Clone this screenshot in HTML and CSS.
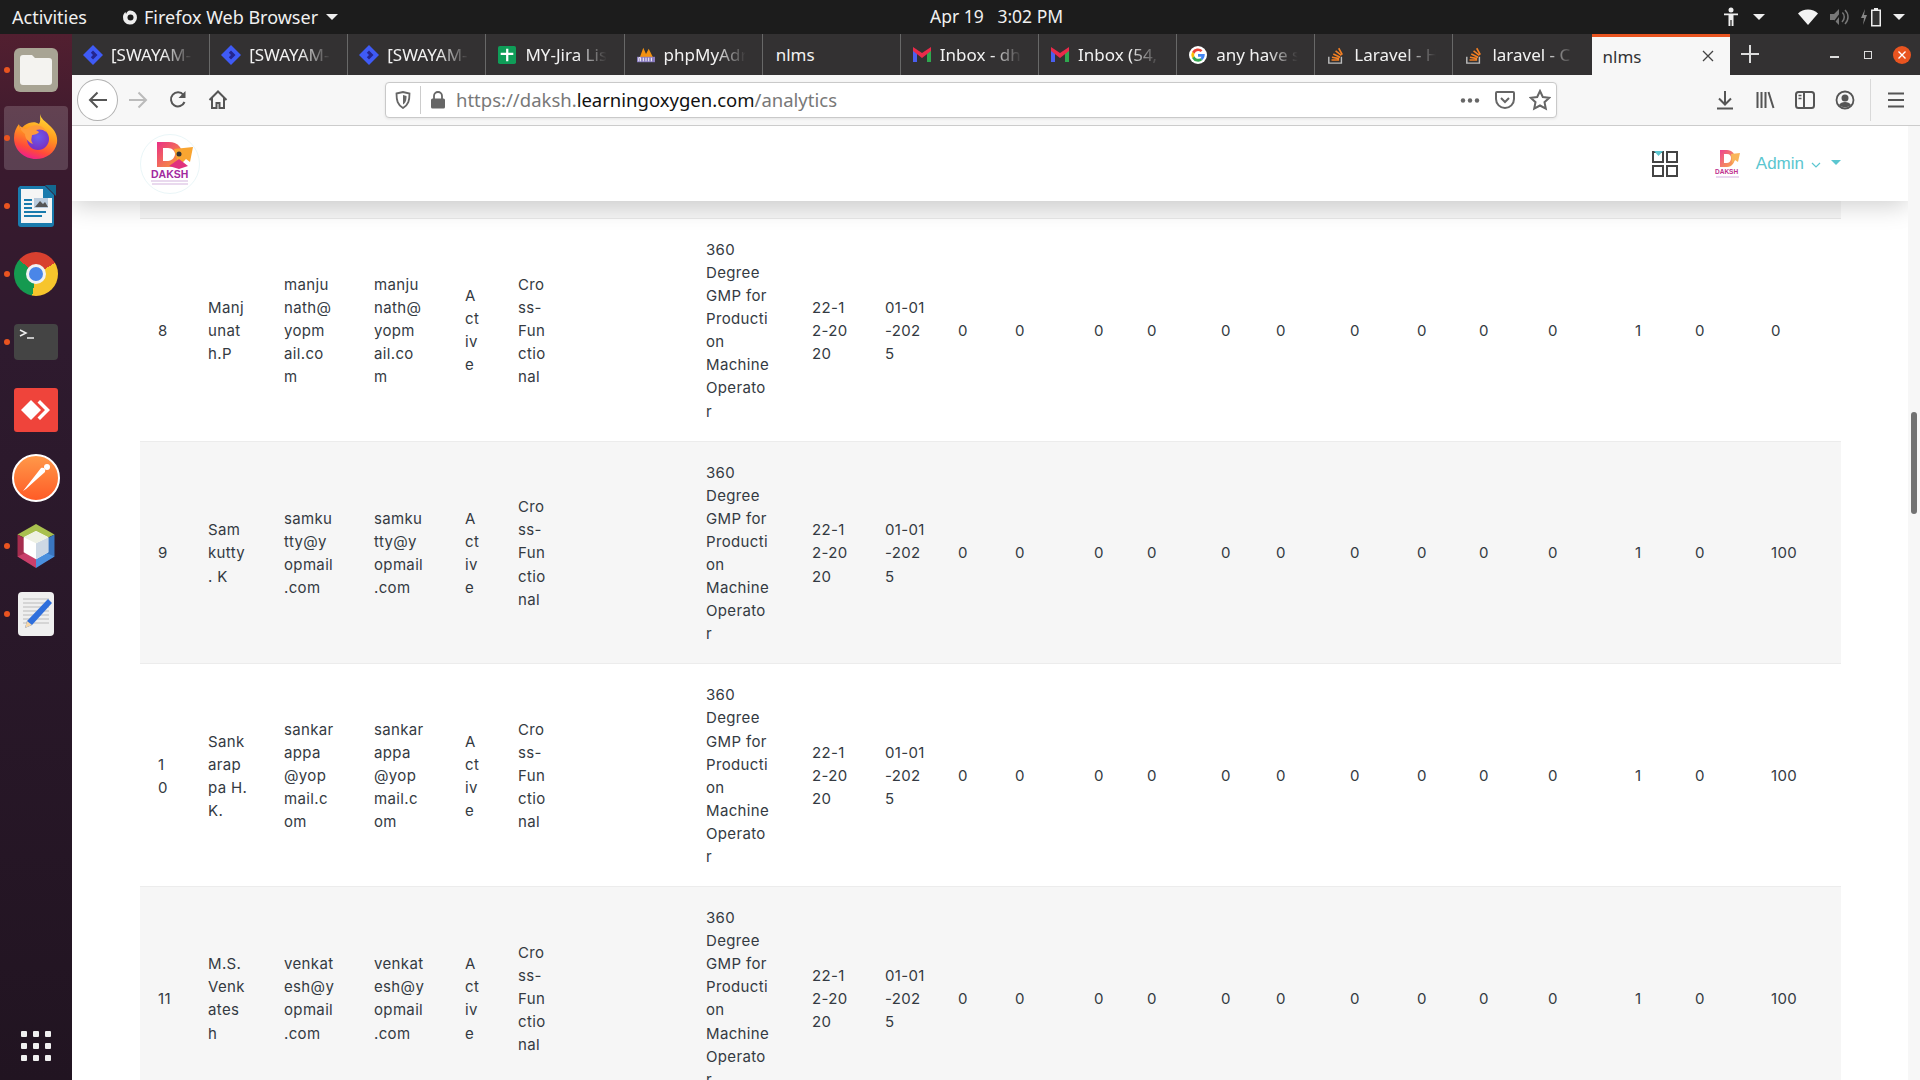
FILE: index.html
```html
<!DOCTYPE html>
<html lang="en">
<head>
  <meta charset="UTF-8">
  <title>nlms</title>
  <link rel="stylesheet" href="styles.css">
</head>
<body>
<div class="topbar">
  <span class="activities">Activities</span>
  <span class="appmenu">
    <svg class="app-ico" viewBox="0 0 18 18"><path d="M9 2.500a7 7 0 1 1-7 6.500c0-2 1-4 2.500-5L5 6c1-2 2-3.500 4-3.500z" fill="#eee"/><circle cx="9.500" cy="9.500" r="3" fill="#1c1c1c"/></svg>
    Firefox Web Browser
    <i class="caret"></i>
  </span>
  <span class="clock">Apr 19&nbsp;&nbsp; 3:02 PM</span>
  <span class="tray">
    <svg class="tray-person" viewBox="0 0 16 20"><circle cx="8" cy="3" r="2.500" fill="#eee"/><path d="M1 6.500h14v1.800h-4.500V19H8.600v-6H7.400v6H5.500V8.300H1z" fill="#eee"/></svg>
    <i class="caret caret-a11y"></i>
    <svg class="tray-wifi" viewBox="0 0 20 16"><path d="M0 4.500C5-1 15-1 20 4.500L10 16z" fill="#f2f2f2"/></svg>
    <svg class="tray-vol" viewBox="0 0 20 18"><path d="M1 6h4l5-5v16l-5-5H1z" fill="#777"/><path d="M13 4c3 3 3 7 0 10M16 2c4 4 4 10 0 14" stroke="#777" stroke-width="1.500" fill="none"/><path d="M3 17 15 1" stroke="#1c1c1c" stroke-width="1.500"/></svg>
    <svg class="tray-batt" viewBox="0 0 26 20"><path d="M5 2 1 11h3l-1 7 4-10H4z" fill="#888"/><path d="M14 1h4v1.500h3v17h-10v-17h3z" fill="#eee"/><path d="M12.500 4h7v14h-7z" fill="#333"/></svg>
    <i class="caret"></i>
  </span>
</div>

<div class="desktop">
  <nav class="dock">
    <div class="dock-item running">
      <svg class="dock-ico" viewBox="0 0 44 44"><rect width="44" height="44" rx="6" fill="#a8a494"/><path d="M6 10a3 3 0 0 1 3-3h9l3 3h14a3 3 0 0 1 3 3v21a3 3 0 0 1-3 3H9a3 3 0 0 1-3-3z" fill="#f4f3f0"/></svg>
    </div>
    <div class="dock-item running active">
      <svg class="dock-ico dock-ico-lg dock-ico-ff" viewBox="0 0 48 48">
        <defs>
          <linearGradient id="ffa" x1="0.750" y1="0" x2="0.400" y2="1"><stop offset="0" stop-color="#ffe03a"/><stop offset="0.450" stop-color="#ff9a1e"/><stop offset="0.800" stop-color="#ff4a3a"/><stop offset="1" stop-color="#f0208a"/></linearGradient>
          <radialGradient id="ffg" cx="0.500" cy="0.400" r="0.650"><stop offset="0" stop-color="#6a5cf0"/><stop offset="1" stop-color="#7a2cbc"/></radialGradient>
        </defs>
        <path d="M28 2c1 5 5 7 9 11 6 5 9 11 8 18-2 10-11 16-21 16C12 47 2 38 2 26c0-6 2-10 5-14 0 2 1 4 2 5 2-3 5-5 8-6 4-1 7-1 10 1 2-3 1-6 1-10z" fill="url(#ffa)"/>
        <circle cx="26" cy="27" r="11" fill="url(#ffg)"/>
        <path d="M7 13c2 2 5 4 8 4 3-3 9-5 13-3 3 1 5 3 6 6-3-3-7-3-10-2l3 2c-1 2-5 3-7 3 0 3-2 5 1 9-5-2-8-6-8-10-3-2-5-5-6-9z" fill="#ff9a3a"/>
      </svg>
    </div>
    <div class="dock-item running">
      <svg class="dock-ico" viewBox="0 0 44 44"><path d="M6 2h25l9 9v29a3 3 0 0 1-3 3H7a3 3 0 0 1-3-3V4z" fill="#1a7bad"/><path d="M7 5h22v9h9v25H7z" fill="#f5f5f5"/><path d="M31 1h11v11z" fill="#13688f"/><path d="M10 15h8v2h-8zm0 4h8v2h-8zm0 4h8v2h-8zm0 4h22v2H10zm0 4h18v2H10z" fill="#1a7bad"/><rect x="20" y="14" width="14" height="10" fill="#bcd"/><path d="M21 23l5-6 3 3 2-2 3 5z" fill="#555"/></svg>
    </div>
    <div class="dock-item running">
      <div class="chrome"><span></span></div>
    </div>
    <div class="dock-item running">
      <svg class="dock-ico" viewBox="0 0 44 36"><rect width="44" height="36" rx="4" fill="#444"/><path d="M6 6l6 3-6 3" stroke="#eee" stroke-width="1.500" fill="none"/><path d="M13 14h7" stroke="#eee" stroke-width="1.500"/></svg>
    </div>
    <div class="dock-item">
      <svg class="dock-ico" viewBox="0 0 44 44"><rect width="44" height="44" rx="3" fill="#ef443b"/><path d="M7 22l10-10 10 10-10 10z" fill="#fff"/><path d="M26 12l10 10-10 10-2.500-2.500L31 22l-7.500-7.500z" fill="#fff"/></svg>
    </div>
    <div class="dock-item">
      <svg class="dock-ico dock-ico-lg" viewBox="0 0 48 48">
        <defs><linearGradient id="pm" x1="0" y1="0" x2="0" y2="1"><stop offset="0" stop-color="#ff9a4a"/><stop offset="1" stop-color="#ff5a26"/></linearGradient></defs>
        <circle cx="24" cy="24" r="23" fill="url(#pm)" stroke="#fff" stroke-width="2"/>
        <path d="M11 37l11-14 7-9c3-1 5 1 4 4l-9 8-10 9z" fill="#fff"/>
        <circle cx="35" cy="13" r="3" fill="#fff"/>
      </svg>
    </div>
    <div class="dock-item running">
      <svg class="dock-ico" viewBox="0 0 42 50"><path d="M21 0 42 12 21 22 0 12z" fill="#a9c04f"/><path d="M42 12v25L31 43V18z" fill="#3a76c0"/><path d="M0 12v25l11 6V18z" fill="#a52d4e"/><path d="M0 37l21 13V38l-10-6z" fill="#c93f6a"/><path d="M42 37 21 50V38l10-6z" fill="#4a90de"/><path d="M21 8l14 7v17l-14 8-14-8V15z" fill="#fff"/><path d="M21 22l14-7v17l-14 8z" fill="#cdd8e4"/><path d="M21 8l14 7-14 7-14-7z" fill="#eef1e4"/></svg>
    </div>
    <div class="dock-item running">
      <svg class="dock-ico" viewBox="0 0 36 44"><rect width="36" height="44" rx="4" fill="#efefef"/><path d="M5 7h26M5 11h26M5 15h26M5 19h26M5 23h26M5 27h26M5 31h26" stroke="#bbb"/><path d="M30 7l4 4-20 22-7 3 2-7z" fill="#2f6fdc"/><path d="M9 29l5 4-7 3z" fill="#f5d6a8"/></svg>
    </div>
    <div class="dock-grid">
      <i></i><i></i><i></i><i></i><i></i><i></i><i></i><i></i><i></i>
    </div>
  </nav>

  <div class="browser">
    <div class="tabstrip">
      <div class="tab"><svg class="fav fav-jira" viewBox="0 0 20 20"><path d="M10 0l10 10-10 10L0 10z" fill="#3f5bf6"/><path d="M10 5.500 14.500 10 10 14.500 7.800 12.200 10 10 7.800 7.800z" fill="#24258f"/></svg><span class="tab-title">[SWAYAM-</span></div>
      <div class="tab"><svg class="fav fav-jira" viewBox="0 0 20 20"><path d="M10 0l10 10-10 10L0 10z" fill="#3f5bf6"/><path d="M10 5.500 14.500 10 10 14.500 7.800 12.200 10 10 7.800 7.800z" fill="#24258f"/></svg><span class="tab-title">[SWAYAM-</span></div>
      <div class="tab"><svg class="fav fav-jira" viewBox="0 0 20 20"><path d="M10 0l10 10-10 10L0 10z" fill="#3f5bf6"/><path d="M10 5.500 14.500 10 10 14.500 7.800 12.200 10 10 7.800 7.800z" fill="#24258f"/></svg><span class="tab-title">[SWAYAM-</span></div>
      <div class="tab"><svg class="fav" viewBox="0 0 20 20"><rect width="20" height="20" rx="2" fill="#0f9d58"/><path d="M9 3h2.500v4.500H17V10h-5.500v7H9v-7H3V7.500h6z" fill="#fff"/></svg><span class="tab-title">MY-Jira Lis</span></div>
      <div class="tab"><svg class="fav" viewBox="0 0 20 20"><path d="M3 13 7 2l3 7 3-6 5 10z" fill="#f29111"/><rect y="12" width="20" height="6" fill="#8a7cc0"/><path d="M2 17v-4h2v4m3 0v-4m3 0v4m3-4v4m3-4v4" stroke="#fff" fill="none"/></svg><span class="tab-title">phpMyAdr</span></div>
      <div class="tab tab-plain"><span class="tab-title">nlms</span></div>
      <div class="tab"><svg class="fav" viewBox="0 0 18 16"><path d="M0 3v12h4V6z" fill="#4a5ff0"/><path d="M18 3v12h-4V6z" fill="#2fa84f"/><path d="M0 0v4l9 7 9-7V0l-9 6z" fill="#ea2a4a"/></svg><span class="tab-title">Inbox - dh</span></div>
      <div class="tab"><svg class="fav" viewBox="0 0 18 16"><path d="M0 3v12h4V6z" fill="#4a5ff0"/><path d="M18 3v12h-4V6z" fill="#2fa84f"/><path d="M0 0v4l9 7 9-7V0l-9 6z" fill="#ea2a4a"/></svg><span class="tab-title">Inbox (54,</span></div>
      <div class="tab"><svg class="fav" viewBox="0 0 20 20"><circle cx="10" cy="10" r="10" fill="#fff"/><path d="M10 5.500a4.500 4.500 0 0 1 3 1.200l2-2A7.500 7.500 0 0 0 3.500 6.500L6 8.500A4.500 4.500 0 0 1 10 5.500z" fill="#ea4335"/><path d="M3.500 6.500a7.500 7.500 0 0 0 0 7L6 11.500a4.500 4.500 0 0 1 0-3z" fill="#fbbc05"/><path d="M3.500 13.500a7.500 7.500 0 0 0 11.500 2l-2.400-2A4.500 4.500 0 0 1 6 11.500z" fill="#34a853"/><path d="M17.500 9H10v3h4a4 4 0 0 1-1.400 1.500l2.400 2c1.500-1.500 2.500-3 2.500-6.500z" fill="#4285f4"/></svg><span class="tab-title">any have s</span></div>
      <div class="tab"><svg class="fav" viewBox="0 0 18 20"><path d="M1 12v7h14v-7" stroke="#bbb" stroke-width="1.600" fill="none"/><path d="M4 15.500h8.500M4.500 12.500l8 1.500M6 9l7.500 3.500M8.500 5.500l6.500 5M12 2.500l4 7" stroke="#f48024" stroke-width="1.800"/></svg><span class="tab-title">Laravel - H</span></div>
      <div class="tab"><svg class="fav" viewBox="0 0 18 20"><path d="M1 12v7h14v-7" stroke="#bbb" stroke-width="1.600" fill="none"/><path d="M4 15.500h8.500M4.500 12.500l8 1.500M6 9l7.500 3.500M8.500 5.500l6.500 5M12 2.500l4 7" stroke="#f48024" stroke-width="1.800"/></svg><span class="tab-title">laravel - C</span></div>
      <div class="tab tab-active"><span class="tab-title">nlms</span>
        <svg class="tab-close" viewBox="0 0 12 12"><path d="M1 1l10 10M11 1 1 11" stroke="#444" stroke-width="1.300"/></svg>
      </div>
      <svg class="newtab" viewBox="0 0 18 18"><path d="M9 0v18M0 9h18" stroke="#ddd" stroke-width="2"/></svg>
      <div class="winctl">
        <i class="win-min"></i>
        <i class="win-max"></i>
        <span class="win-close">
          <svg viewBox="0 0 10 10"><path d="M1.500 1.500l7 7M8.500 1.500l-7 7" stroke="#fff" stroke-width="1.400"/></svg>
        </span>
      </div>
    </div>

    <div class="toolbar">
      <span class="backbtn">
        <svg class="tb-ico" viewBox="0 0 20 20"><path d="M19 10H2M9.500 2.500 2 10l7.500 7.500" stroke="#555" stroke-width="2" fill="none"/></svg>
      </span>
      <svg class="tb-ico tb-fwd" viewBox="0 0 20 20"><path d="M1 10h17M10.500 2.500 18 10l-7.500 7.500" stroke="#bbb" stroke-width="2" fill="none"/></svg>
      <svg class="tb-ico tb-reload" viewBox="0 0 20 20"><path d="M16.500 12a7 7 0 1 1-1-7" stroke="#555" stroke-width="2" fill="none"/><path d="M17.500 1v7h-7z" fill="#555"/></svg>
      <svg class="tb-ico tb-home" viewBox="0 0 20 20"><path d="M1.500 10 10 1.500l8.500 8.500M4 8v10h4.500v-5h3v5H16V8" stroke="#555" stroke-width="2" fill="none"/></svg>
      <div class="urlbar">
        <svg class="url-shield" viewBox="0 0 16 18"><path d="M1.500 2.500 8 1l6.500 1.500c0 7-1 11-6.500 14.500C2.500 13.500 1.500 9.500 1.500 2.500z" stroke="#666" stroke-width="1.800" fill="none"/><path d="M8 4l3.500 1c0 4-.5 6.500-3.500 8.500z" fill="#666"/></svg>
        <i class="url-sep"></i>
        <svg class="url-lock" viewBox="0 0 16 18"><path d="M4 8V5a4 4 0 0 1 8 0v3" stroke="#666" stroke-width="1.800" fill="none"/><rect x="1" y="7.500" width="14" height="10" rx="1.500" fill="#666"/></svg>
        <span class="url-text">https://daksh.<b>learningoxygen.com</b>/analytics</span>
        <svg class="url-dots" viewBox="0 0 20 5"><circle cx="3" cy="2.500" r="2.200" fill="#666"/><circle cx="10" cy="2.500" r="2.200" fill="#666"/><circle cx="17" cy="2.500" r="2.200" fill="#666"/></svg>
        <svg class="url-pocket" viewBox="0 0 20 20"><path d="M2 2h16a1 1 0 0 1 1 1v6a9 9 0 0 1-18 0V3a1 1 0 0 1 1-1z" stroke="#666" stroke-width="2" fill="none"/><path d="M6 8l4 4 4-4" stroke="#666" stroke-width="2" fill="none"/></svg>
        <svg class="url-star" viewBox="0 0 22 22"><path d="M11 2l2.800 6 6.500.8-4.800 4.400 1.300 6.500L11 16.500l-5.800 3.200 1.300-6.500L1.700 8.800 8.200 8z" stroke="#666" stroke-width="2" fill="none"/></svg>
      </div>
      <div class="tb-right">
        <svg class="tb-ico" viewBox="0 0 20 20"><path d="M10 1v13M4 8.500l6 6 6-6" stroke="#555" stroke-width="2" fill="none"/><path d="M2 18.500h16" stroke="#555" stroke-width="2"/></svg>
        <svg class="tb-ico" viewBox="0 0 20 20"><path d="M2.500 2v16M6.500 2v16M10.500 2v16M13.500 2l5 16" stroke="#555" stroke-width="2" fill="none"/></svg>
        <svg class="tb-ico" viewBox="0 0 20 20"><rect x="1" y="2" width="18" height="16" rx="2.500" stroke="#555" stroke-width="2" fill="none"/><path d="M9 2v16" stroke="#555" stroke-width="2"/><path d="M3.500 5.500h3M3.500 8.500h3" stroke="#555" stroke-width="1.500"/></svg>
        <svg class="tb-ico" viewBox="0 0 20 20"><circle cx="10" cy="10" r="8.500" stroke="#555" stroke-width="1.800" fill="none"/><circle cx="10" cy="8" r="3.500" fill="#555"/><path d="M4 15c2-4 10-4 12 0-3 3-9 3-12 0z" fill="#555"/></svg>
        <i class="tb-sep"></i>
        <svg class="tb-ico" viewBox="0 0 20 20"><path d="M2 3.500h16M2 10h16M2 16.500h16" stroke="#555" stroke-width="2.200"/></svg>
      </div>
    </div>

    <div class="page">
      <main class="content">
        <header class="appbar">
          <svg class="logo" viewBox="0 0 60 63">
            <defs><linearGradient id="dk" x1="0" y1="0" x2="1" y2="1"><stop offset="0" stop-color="#ea2f86"/><stop offset="1" stop-color="#f9a531"/></linearGradient></defs>
            <circle cx="30" cy="31" r="29.500" fill="#fff" stroke="#eaf6f8"/>
            <path d="M17 9h12c9 0 13 6 13 12s-5 13-13 13H17z" fill="url(#dk)"/>
            <path d="M23 15h5c4 0 7 3 7 6s-3 7-7 7h-5z" fill="#fff"/>
            <path d="M34 16l19-2-3 15-4-3-7 7z" fill="#f9a531"/>
            <circle cx="39" cy="21" r="2.500" fill="#333"/>
            <path d="M29 33l10-7 9 7-9 3z" fill="#e0337e"/>
            <text x="11" y="45" class="logo-word">DAKSH</text>
            <path d="M11 48h37M12 51h36" stroke="#d4b4de" stroke-width="1.200"/>
          </svg>
          <div class="appbar-right">
            <svg class="grid-ico" viewBox="0 0 26 26"><path d="M1 1h10v10H1zM15 1h10v10H15zM1 15h10v10H1zM15 15h10v10H15z" stroke="#444" stroke-width="2" fill="none"/><path d="M2 0h9L6.500 5z" fill="#5bc6d0"/></svg>
            <svg class="avatar" viewBox="0 0 30 36">
              <path d="M8 4h7c5 0 8 4 8 8s-3 9-8 9H8z" fill="url(#dk)" opacity="0.900"/>
              <path d="M12 8h3c3 0 4 2 4 4s-1 5-4 5h-3z" fill="#fff"/>
              <path d="M19 8l9-1-2 9-3-2-3 3z" fill="#f9b65a"/>
              <text x="3" y="28" class="avatar-word">DAKSH</text>
              <path d="M4 31h23" stroke="#e2c8ea" stroke-width="1.500"/>
            </svg>
            <span class="admin">Admin
              <svg class="admin-chev" viewBox="0 0 10 6"><path d="M1 1l4 4 4-4" stroke="#5bc6d0" stroke-width="1.200" fill="none"/></svg>
            </span>
            <i class="admin-caret"></i>
          </div>
        </header>

        <div class="tablewrap">
          <div class="row-cut"></div>
          <table class="report">
            <colgroup>
              <col><col><col><col><col><col><col><col><col><col><col><col><col><col><col><col><col><col><col><col><col><col>
            </colgroup>
            <tbody>
              <tr>
                <td>8</td>
                <td>Manj<br>unat<br>h.P</td>
                <td>manju<br>nath@<br>yopm<br>ail.co<br>m</td>
                <td>manju<br>nath@<br>yopm<br>ail.co<br>m</td>
                <td>A<br>ct<br>iv<br>e</td>
                <td>Cro<br>ss-<br>Fun<br>ctio<br>nal</td>
                <td>360<br>Degree<br>GMP for<br>Producti<br>on<br>Machine<br>Operato<br>r</td>
                <td>22-1<br>2-20<br>20</td>
                <td>01-01<br>-202<br>5</td>
                <td>0</td><td>0</td><td>0</td><td>0</td><td>0</td><td>0</td><td>0</td><td>0</td><td>0</td><td>0</td>
                <td>1</td><td>0</td><td>0</td>
              </tr>
              <tr>
                <td>9</td>
                <td>Sam<br>kutty<br>. K</td>
                <td>samku<br>tty@y<br>opmail<br>.com</td>
                <td>samku<br>tty@y<br>opmail<br>.com</td>
                <td>A<br>ct<br>iv<br>e</td>
                <td>Cro<br>ss-<br>Fun<br>ctio<br>nal</td>
                <td>360<br>Degree<br>GMP for<br>Producti<br>on<br>Machine<br>Operato<br>r</td>
                <td>22-1<br>2-20<br>20</td>
                <td>01-01<br>-202<br>5</td>
                <td>0</td><td>0</td><td>0</td><td>0</td><td>0</td><td>0</td><td>0</td><td>0</td><td>0</td><td>0</td>
                <td>1</td><td>0</td><td>100</td>
              </tr>
              <tr>
                <td>1<br>0</td>
                <td>Sank<br>arap<br>pa H.<br>K.</td>
                <td>sankar<br>appa<br>@yop<br>mail.c<br>om</td>
                <td>sankar<br>appa<br>@yop<br>mail.c<br>om</td>
                <td>A<br>ct<br>iv<br>e</td>
                <td>Cro<br>ss-<br>Fun<br>ctio<br>nal</td>
                <td>360<br>Degree<br>GMP for<br>Producti<br>on<br>Machine<br>Operato<br>r</td>
                <td>22-1<br>2-20<br>20</td>
                <td>01-01<br>-202<br>5</td>
                <td>0</td><td>0</td><td>0</td><td>0</td><td>0</td><td>0</td><td>0</td><td>0</td><td>0</td><td>0</td>
                <td>1</td><td>0</td><td>100</td>
              </tr>
              <tr>
                <td>11</td>
                <td>M.S.<br>Venk<br>ates<br>h</td>
                <td>venkat<br>esh@y<br>opmail<br>.com</td>
                <td>venkat<br>esh@y<br>opmail<br>.com</td>
                <td>A<br>ct<br>iv<br>e</td>
                <td>Cro<br>ss-<br>Fun<br>ctio<br>nal</td>
                <td>360<br>Degree<br>GMP for<br>Producti<br>on<br>Machine<br>Operato<br>r</td>
                <td>22-1<br>2-20<br>20</td>
                <td>01-01<br>-202<br>5</td>
                <td>0</td><td>0</td><td>0</td><td>0</td><td>0</td><td>0</td><td>0</td><td>0</td><td>0</td><td>0</td>
                <td>1</td><td>0</td><td>100</td>
              </tr>
            </tbody>
          </table>
        </div>
      </main>
      <div class="scrollbar"><i class="thumb"></i></div>
    </div>
  </div>
</div>
</body>
</html>
```

FILE: styles.css
```css
* {
  box-sizing: border-box;
}
html, body {
  margin: 0;
  height: 100%;
  overflow: hidden;
}
body {
  display: flex;
  flex-direction: column;
  font-family: "Noto Sans", sans-serif;
  background: #fff;
}
i {
  display: block;
}

/* gnome top bar */
.topbar {
  height: 34px;
  flex: none;
  display: flex;
  align-items: center;
  position: relative;
  background: #1c1c1c;
  color: #f0f0f0;
  font-size: 18px;
}
.activities {
  margin-left: 12px;
}
.appmenu {
  margin-left: 34px;
  display: flex;
  align-items: center;
  gap: 5px;
}
.app-ico {
  width: 18px;
  height: 18px;
}
.caret {
  width: 0;
  height: 0;
  margin-left: 3px;
  border-left: 6px solid transparent;
  border-right: 6px solid transparent;
  border-top: 6px solid #eee;
}
.clock {
  position: absolute;
  left: 930px;
  top: 4px;
  font-size: 17.500px;
}
.tray {
  margin-left: auto;
  margin-right: 15px;
  display: flex;
  align-items: center;
}
.tray-person {
  width: 16px;
  height: 20px;
}
.caret-a11y {
  margin: 0 33px 0 14px;
}
.tray-wifi {
  width: 20px;
  height: 16px;
}
.tray-vol {
  width: 20px;
  height: 18px;
  margin-left: 11px;
}
.tray-batt {
  width: 26px;
  height: 20px;
  margin: 0 4px 0 11px;
}

.desktop {
  flex: 1;
  min-height: 0;
  display: flex;
}

/* launcher */
.dock {
  width: 72px;
  flex: none;
  display: flex;
  flex-direction: column;
  padding-top: 2px;
  background: linear-gradient(180deg, #521f30 0%, #3a1a2e 12%, #2e1a2e 30%, #211421 100%);
}
.dock-item {
  height: 68px;
  flex: none;
  display: flex;
  align-items: center;
  justify-content: center;
  position: relative;
}
.dock-item.running::before {
  content: "";
  position: absolute;
  left: 4px;
  top: 31px;
  width: 6px;
  height: 6px;
  border-radius: 50%;
  background: #e95420;
  z-index: 2;
}
.dock-item.active::after {
  content: "";
  position: absolute;
  left: 4px;
  top: 2px;
  width: 64px;
  height: 64px;
  border-radius: 4px;
  background: rgba(255, 255, 255, 0.17);
}
.dock-ico {
  width: 44px;
  height: 44px;
  position: relative;
  z-index: 1;
}
.dock-ico-lg {
  width: 48px;
  height: 48px;
}
.dock-ico-ff {
  margin-top: -4px;
}
.chrome {
  width: 44px;
  height: 44px;
  border-radius: 50%;
  display: flex;
  align-items: center;
  justify-content: center;
  background: conic-gradient(#d8402f 0deg 60deg, #f7c52c 60deg 190deg, #159a50 190deg 310deg, #d8402f 310deg);
}
.chrome span {
  width: 20px;
  height: 20px;
  border-radius: 50%;
  background: #4a86e8;
  border: 3px solid #f2f2f2;
}
.dock-grid {
  margin-top: auto;
  margin-bottom: 19px;
  margin-left: 21px;
  width: 30px;
  display: grid;
  grid-template-columns: repeat(3, 6px);
  gap: 6px;
}
.dock-grid i {
  height: 6px;
  border-radius: 1px;
  background: #f0f0f0;
}

.browser {
  flex: 1;
  min-width: 0;
  display: flex;
  flex-direction: column;
}

/* tabs */
.tabstrip {
  height: 41px;
  flex: none;
  display: flex;
  background: #333132;
  color: #f2f2f2;
  font-size: 17px;
}
.tab {
  width: 138.150px;
  flex: none;
  display: flex;
  align-items: center;
  padding-left: 12px;
  border-right: 1px solid #686868;
}
.tab-plain {
  padding-left: 13px;
}
.tab-title {
  width: 89px;
  flex: none;
  overflow: hidden;
  white-space: nowrap;
  -webkit-mask-image: linear-gradient(90deg, #000 58%, transparent 92%);
  mask-image: linear-gradient(90deg, #000 58%, transparent 92%);
}
.fav {
  width: 18px;
  height: 18px;
  flex: none;
  margin-right: 9px;
}
.fav-jira {
  width: 20px;
  height: 20px;
  margin-left: -1px;
  margin-right: 8px;
}
.tab-plain .tab-title {
  -webkit-mask-image: none;
  mask-image: none;
}
.tab:nth-child(11) {
  border-right: 0;
}
.tab-active {
  padding-left: 11px;
  background: #f7f7f7;
  color: #333;
  border-top: 3px solid #e95420;
  border-right: 0;
  position: relative;
}
.tab-active .tab-title {
  -webkit-mask-image: none;
  mask-image: none;
}
.tab-close {
  width: 12px;
  height: 12px;
  position: absolute;
  left: 110px;
  top: 13px;
}
.newtab {
  width: 18px;
  height: 18px;
  margin: 11px 0 0 11px;
  flex: none;
}
.winctl {
  margin-left: auto;
  margin-right: 9px;
  display: flex;
  align-items: center;
  height: 41px;
}
.win-min {
  width: 9px;
  height: 2px;
  background: #ddd;
  margin-top: 4px;
}
.win-max {
  width: 8px;
  height: 8px;
  border: 1px solid #ddd;
  margin: 0 21px 0 25px;
}
.win-close {
  width: 18px;
  height: 18px;
  border-radius: 50%;
  background: #e95420;
  display: flex;
  align-items: center;
  justify-content: center;
}
.win-close svg {
  width: 10px;
  height: 10px;
}

/* navigation toolbar */
.toolbar {
  height: 51px;
  flex: none;
  display: flex;
  align-items: center;
  position: relative;
  background: #f7f7f7;
  border-bottom: 1px solid #ccc;
  padding-left: 5px;
}
.tb-ico {
  width: 20px;
  height: 20px;
  flex: none;
}
.backbtn {
  width: 41px;
  height: 42px;
  flex: none;
  border: 1px solid #b1b1b1;
  border-radius: 50%;
  background: #fff;
  display: flex;
  align-items: center;
  justify-content: center;
}
.tb-fwd {
  margin-left: 10px;
}
.tb-reload {
  margin-left: 20px;
}
.tb-home {
  margin-left: 20px;
}
.urlbar {
  width: 1172px;
  height: 36px;
  margin-left: 157px;
  flex: none;
  display: flex;
  align-items: center;
  background: #fff;
  border: 1px solid #c9c9c9;
  border-radius: 4px;
  box-shadow: 0 1px 3px rgba(0, 0, 0, 0.08);
  font-size: 18.500px;
  line-height: 24px;
  color: #787878;
}
.url-shield {
  width: 16px;
  height: 18px;
  margin-left: 9px;
}
.url-sep {
  width: 1px;
  height: 28px;
  margin: 0 9px;
  background: #ccc;
}
.url-lock {
  width: 16px;
  height: 18px;
}
.url-text {
  margin-left: 10px;
  margin-top: -1px;
  white-space: nowrap;
}
.url-text b {
  font-weight: 400;
  color: #111;
}
.url-dots {
  width: 20px;
  height: 5px;
  margin-left: auto;
}
.url-pocket {
  width: 20px;
  height: 20px;
  margin-left: 15px;
}
.url-star {
  width: 22px;
  height: 22px;
  margin: 0 5px 0 14px;
}
.tb-right {
  margin-left: 158px;
  display: flex;
  align-items: center;
  gap: 20px;
}
.tb-sep {
  width: 1px;
  height: 42px;
  background: #d9d9d9;
  margin: 0 -5px 0 -5px;
}

/* page */
.page {
  flex: 1;
  min-height: 0;
  display: flex;
}
.content {
  flex: 1;
  min-width: 0;
  overflow: hidden;
}
.scrollbar {
  width: 12px;
  flex: none;
  position: relative;
  background: #f7f7f7;
}
.thumb {
  position: absolute;
  left: 3px;
  top: 286px;
  width: 6px;
  height: 102px;
  border-radius: 3px;
  background: #727272;
}
.appbar {
  height: 75px;
  display: flex;
  align-items: center;
  position: relative;
  z-index: 2;
  padding-left: 68px;
  background: #fff;
  box-shadow: 0 4px 24px rgba(0, 0, 0, 0.2);
}
.logo {
  width: 60px;
  height: 63px;
  margin-top: 1px;
}
.logo-word {
  font-family: "Liberation Sans", sans-serif;
  font-size: 10.500px;
  font-weight: 700;
  fill: #a22a9e;
}
.appbar-right {
  margin-left: auto;
  margin-right: 67px;
  display: flex;
  align-items: center;
}
.grid-ico {
  width: 26px;
  height: 26px;
}
.avatar {
  width: 30px;
  height: 36px;
  margin-left: 34px;
}
.avatar-word {
  font-family: "Liberation Sans", sans-serif;
  font-size: 6.500px;
  font-weight: 700;
  fill: #c0308e;
}
.admin {
  margin-left: 14px;
  display: flex;
  align-items: center;
  gap: 7px;
  font-family: "Liberation Sans", sans-serif;
  font-size: 17px;
  color: #5bc6d0;
}
.admin-chev {
  width: 10px;
  height: 6px;
  margin-top: 3px;
}
.admin-caret {
  width: 0;
  height: 0;
  margin-left: 10px;
  margin-top: -2px;
  border-left: 5px solid transparent;
  border-right: 5px solid transparent;
  border-top: 5px solid #5bc6d0;
}

/* report table */
.tablewrap {
  margin: 0 67px 0 68px;
}
.row-cut {
  height: 18px;
  background: #f6f6f6;
  border-bottom: 1px solid #e8e8e8;
}
.report {
  width: 1701px;
  table-layout: fixed;
  border-collapse: collapse;
  font-family: Inter, sans-serif;
  font-size: 15px;
  letter-spacing: 0.35px;
  line-height: 23.100px;
  color: #343a42;
}
.report td {
  padding: 18.900px 0 18.100px 18px;
  vertical-align: middle;
  border-bottom: 1px solid #ececec;
  white-space: nowrap;
}
.report tr:nth-child(even) {
  background: #f6f6f6;
}
.report col:nth-child(1) { width: 50px; }
.report col:nth-child(2) { width: 76px; }
.report col:nth-child(3) { width: 90px; }
.report col:nth-child(4) { width: 91px; }
.report col:nth-child(5) { width: 53px; }
.report col:nth-child(6) { width: 188px; }
.report col:nth-child(7) { width: 106px; }
.report col:nth-child(8) { width: 73px; }
.report col:nth-child(9) { width: 73px; }
.report col:nth-child(10) { width: 57px; }
.report col:nth-child(11) { width: 79px; }
.report col:nth-child(12) { width: 53px; }
.report col:nth-child(13) { width: 74px; }
.report col:nth-child(14) { width: 55px; }
.report col:nth-child(15) { width: 74px; }
.report col:nth-child(16) { width: 67px; }
.report col:nth-child(17) { width: 62px; }
.report col:nth-child(18) { width: 69px; }
.report col:nth-child(19) { width: 87px; }
.report col:nth-child(20) { width: 60px; }
.report col:nth-child(21) { width: 76px; }
.report col:nth-child(22) { width: 88px; }
```
